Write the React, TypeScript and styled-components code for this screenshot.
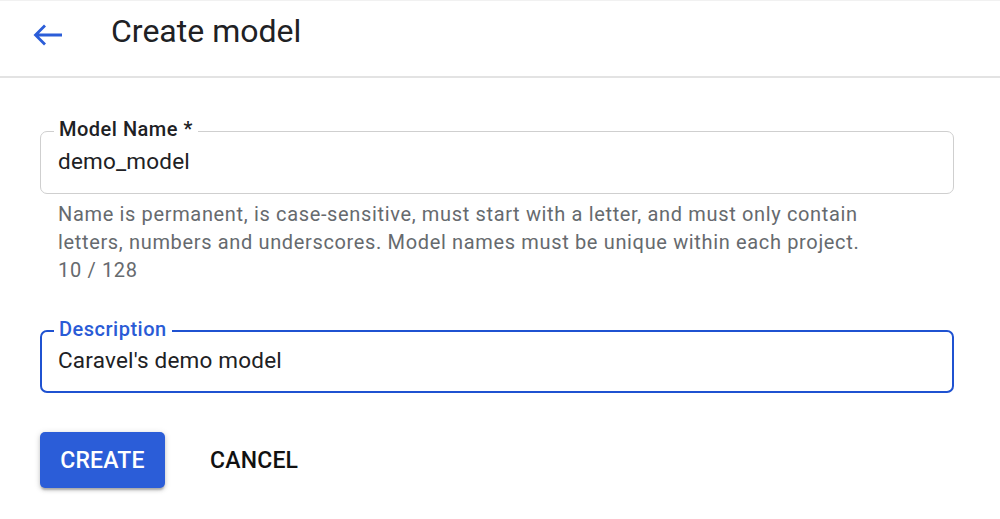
import React from "react";
import styled, { createGlobalStyle } from "styled-components";

const Global = createGlobalStyle`
  html, body { margin: 0; padding: 0; background: #fff; }
  body { font-family: Roboto, "Liberation Sans", Arial, sans-serif; color: #202124; }
  * { box-sizing: border-box; }
`;

const Page = styled.div`
  width: 1000px;
  height: 519px;
  background: #fff;
  border-top: 1px solid #f1f1f1;
`;

const Header = styled.header`
  height: 77px;
  display: flex;
  align-items: flex-start;
  padding: 12px 0 0 33px;
  border-bottom: 2px solid #e3e3e3;
`;

const BackButton = styled.button`
  width: 30px;
  height: 22px;
  padding: 0;
  margin: 11px 0 0 0;
  border: none;
  background: transparent;
  display: flex;
  cursor: pointer;
`;

const Title = styled.h1`
  margin: 0 0 0 48px;
  font-size: 32px;
  line-height: 37.5px;
  font-weight: 400;
  color: #202124;
`;

const Main = styled.main`
  padding: 53px 46px 0 40px;
  display: flex;
  flex-direction: column;
`;

const Field = styled.div<{ $focused?: boolean }>`
  position: relative;
  height: 63px;
  border: ${(p) => (p.$focused ? "2.5px solid #1f52d1" : "1.5px solid #cfcfcf")};
  border-radius: 7px;
  display: flex;
  align-items: center;
  padding-left: ${(p) => (p.$focused ? "16px" : "17px")};
`;

const Label = styled.span<{ $focused?: boolean }>`
  position: absolute;
  top: -15px;
  left: ${(p) => (p.$focused ? "12px" : "13px")};
  padding: 0 5px;
  background: #fff;
  font-size: 20px;
  line-height: 24px;
  font-weight: 500;
  letter-spacing: 0.5px;
  color: ${(p) => (p.$focused ? "#2a5bd6" : "#202124")};
`;

const Value = styled.span`
  font-size: 22.5px;
  letter-spacing: 0.2px;
  color: #202124;
  margin-bottom: 3px;
`;

const Helper = styled.div`
  margin: 6px 0 0 18px;
  font-size: 20px;
  line-height: 28px;
  color: #666a6e;
  letter-spacing: 0.65px;
  white-space: nowrap;
`;

const Gap = styled.div<{ $h: number }>`
  height: ${(p) => p.$h}px;
`;

const Actions = styled.div`
  display: flex;
  align-items: center;
  gap: 22px;
`;

const PrimaryButton = styled.button`
  width: 125px;
  height: 56px;
  border: none;
  border-radius: 5px;
  background: #2b5dd8;
  color: #fff;
  font-family: inherit;
  font-size: 23px;
  font-weight: 500;
  letter-spacing: 0.2px;
  box-shadow: 0 3px 2px -1px rgba(0,0,0,0.2), 0 2px 4px 0 rgba(0,0,0,0.14), 0 1px 7px 0 rgba(0,0,0,0.12);
  cursor: pointer;
`;

const TextButton = styled.button`
  height: 56px;
  padding: 0 23px;
  border: none;
  background: transparent;
  color: #111;
  font-family: inherit;
  font-size: 23px;
  font-weight: 500;
  letter-spacing: 0.2px;
  cursor: pointer;
`;

export default function App() {
  return (
    <Page>
      <Global />
      <Header>
        <BackButton aria-label="Back">
          <svg width="30" height="22" viewBox="0 0 30 22">
            <path d="M29 11H2.5M12 1.5L2.5 11L12 20.5" fill="none" stroke="#2b5dd8" strokeWidth="2.8" strokeLinecap="butt" strokeLinejoin="miter" />
          </svg>
        </BackButton>
        <Title>Create model</Title>
      </Header>
      <Main>
        <Field>
          <Label>Model Name *</Label>
          <Value>demo_model</Value>
        </Field>
        <Helper>
          Name is permanent, is case-sensitive, must start with a letter, and must only contain
          <br />
          letters, numbers and underscores. Model names must be unique within each project.
          <br />
          10 / 128
        </Helper>
        <Gap $h={46} />
        <Field $focused>
          <Label $focused>Description</Label>
          <Value>Caravel's demo model</Value>
        </Field>
        <Gap $h={39} />
        <Actions>
          <PrimaryButton>CREATE</PrimaryButton>
          <TextButton>CANCEL</TextButton>
        </Actions>
      </Main>
    </Page>
  );
}
